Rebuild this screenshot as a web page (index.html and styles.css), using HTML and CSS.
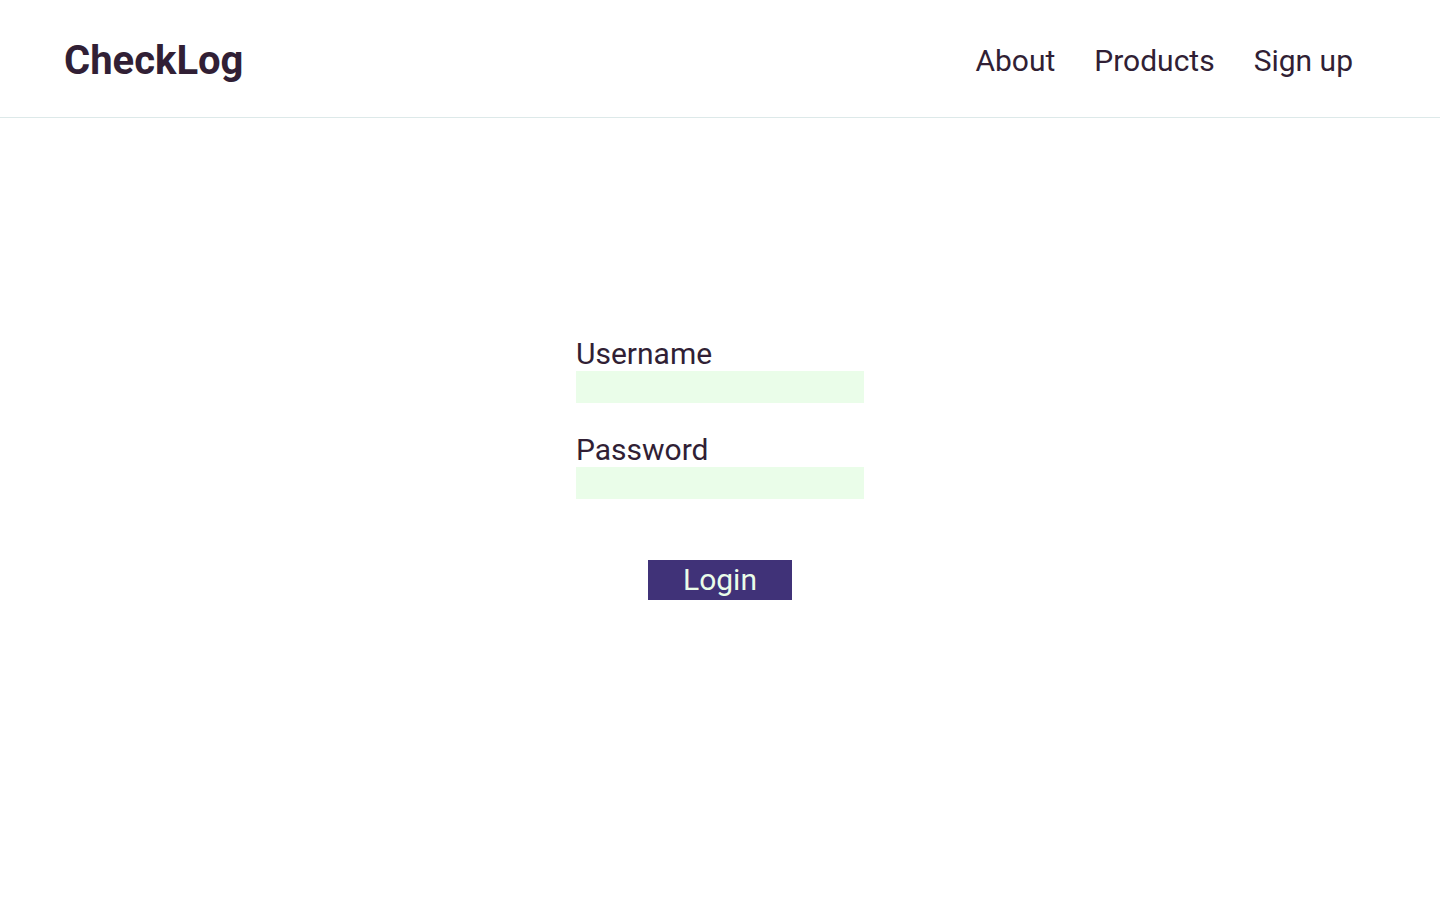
FILE: index.html
```html
<!DOCTYPE html>
<html>
<head>
<meta charset="utf-8">
<link rel="stylesheet" href="styles.css">
</head>
<body>
<header class="topbar">
  <div class="logo">CheckLog</div>
  <nav class="nav">
    <a class="nav-link" href="#">About</a>
    <a class="nav-link" href="#">Products</a>
    <a class="nav-link" href="#">Sign up</a>
  </nav>
</header>
<main class="main">
  <form class="login-form">
    <label class="field-label" for="u">Username</label>
    <input class="field-input" id="u" type="text">
    <label class="field-label second" for="p">Password</label>
    <input class="field-input" id="p" type="password">
    <button class="login-btn" type="button">Login</button>
  </form>
</main>
</body>
</html>
```
FILE: styles.css
```css
* { box-sizing: border-box; }
html, body { margin: 0; padding: 0; background: #ffffff; }
body { font-family: Roboto, "Liberation Sans", sans-serif; color: #311f35; }
.topbar {
  height: 118px;
  border-bottom: 1px solid #dde9e9;
  display: flex;
  align-items: center;
  justify-content: space-between;
  padding: 0 87px 0 64px;
}
.logo { font-size: 40px; font-weight: 700; color: #311f35; margin-top: 4px; }
.nav { display: flex; gap: 39px; }
.nav-link { font-size: 30px; color: #311f35; text-decoration: none; margin-top: 4px; }
.main { display: flex; justify-content: center; padding-top: 218px; }
.login-form { width: 288px; display: flex; flex-direction: column; }
.field-label { font-size: 30px; line-height: 36px; display: block; margin-bottom: -1px; }
.field-label.second { margin-top: 29px; }
.field-input {
  position: relative;
  width: 288px; height: 32px; border: none; background: #eafde9; outline: none; padding: 0;
}
.login-btn {
  align-self: center; margin-top: 61px; width: 144px; height: 40px; border: none;
  background: #403278; color: #eafde9; font-family: Roboto, "Liberation Sans", sans-serif;
  font-size: 30px; line-height: 40px; padding: 0;
}
```
